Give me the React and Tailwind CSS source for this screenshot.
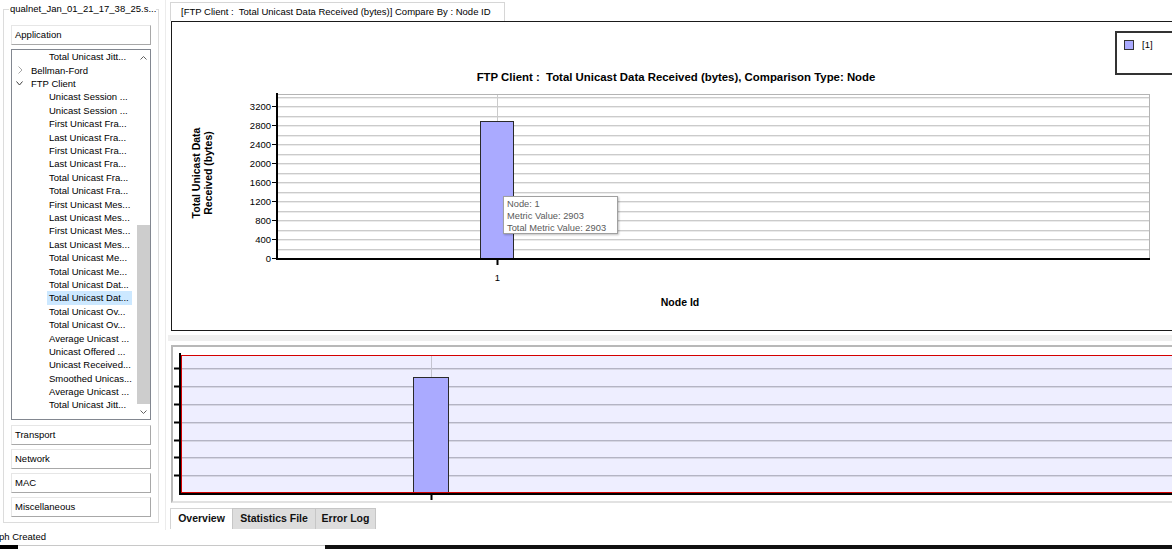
const treeItems = [
  "Unicast Session ...",
  "Unicast Session ...",
  "First Unicast Fra...",
  "Last Unicast Fra...",
  "First Unicast Fra...",
  "Last Unicast Fra...",
  "Total Unicast Fra...",
  "Total Unicast Fra...",
  "First Unicast Mes...",
  "Last Unicast Mes...",
  "First Unicast Mes...",
  "Last Unicast Mes...",
  "Total Unicast Me...",
  "Total Unicast Me...",
  "Total Unicast Dat...",
  "Total Unicast Dat...",
  "Total Unicast Ov...",
  "Total Unicast Ov...",
  "Average Unicast ...",
  "Unicast Offered ...",
  "Unicast Received...",
  "Smoothed Unicas...",
  "Average Unicast ...",
  "Total Unicast Jitt...",
];

const SELECTED = 15;

function SideButton({ label, className }) {
  return (
    <div
      className={`ml-[7px] flex h-[20px] w-[140px] items-center border border-[#e6e6e6] border-r-[#a8a8a8] border-b-[#a8a8a8] bg-white pl-[3px] text-[9.5px] text-black ${className}`}
    >
      {label}
    </div>
  );
}

function LeafRow({ label, selected }) {
  return (
    <div className="flex h-[13.4px] items-center pl-[35px]">
      <span
        className={`block h-[13.4px] pl-[2px] pr-[3px] leading-[13.4px] whitespace-nowrap ${
          selected ? "bg-[#cce8ff]" : ""
        }`}
      >
        {label}
      </span>
    </div>
  );
}

function Tree() {
  return (
    <div className="ml-[7px] mt-[4px] flex h-[371px] w-[140px] border border-[#828790] bg-white">
      <div className="flex-1 overflow-hidden pt-[0.3px] text-[9.5px] text-black">
        <LeafRow label="Total Unicast Jitt..." />
        <div className="flex h-[13.4px] items-center pl-[6px]">
          <svg width="5" height="8" viewBox="0 0 5 8" className="block">
            <polyline points="0.5,0.5 4,4 0.5,7.5" fill="none" stroke="#a6a6a6" strokeWidth="1" />
          </svg>
          <span className="ml-[8px] leading-[13.4px]">Bellman-Ford</span>
        </div>
        <div className="flex h-[13.4px] items-center pl-[4px]">
          <svg width="7" height="5" viewBox="0 0 7 5" className="block">
            <polyline points="0.5,0.5 3.5,4 6.5,0.5" fill="none" stroke="#404040" strokeWidth="1" />
          </svg>
          <span className="ml-[8px] leading-[13.4px]">FTP Client</span>
        </div>
        {treeItems.map((t, i) => (
          <LeafRow key={i} label={t} selected={i === SELECTED} />
        ))}
      </div>
      {/* scrollbar */}
      <div className="flex w-[14px] flex-col">
        <div className="flex h-[15px] items-center justify-center">
          <svg width="7" height="4" viewBox="0 0 7 4" className="block">
            <polyline points="0.5,3.5 3.5,0.5 6.5,3.5" fill="none" stroke="#606060" strokeWidth="1" />
          </svg>
        </div>
        <div className="flex flex-1 flex-col">
          <div className="flex-1" />
          <div className="mx-auto h-[179px] w-[13px] bg-[#cdcdcd]" />
        </div>
        <div className="flex h-[15px] items-center justify-center">
          <svg width="7" height="4" viewBox="0 0 7 4" className="block">
            <polyline points="0.5,0.5 3.5,3.5 6.5,0.5" fill="none" stroke="#606060" strokeWidth="1" />
          </svg>
        </div>
      </div>
    </div>
  );
}

function LeftPanel() {
  return (
    <div className="w-[165px] shrink-0 bg-white">
      <div className="relative ml-[3px] mt-[9px] h-[514px] w-[156px] border border-[#dcdcdc] pt-[15px]">
        <span className="absolute left-[5px] top-[-8px] bg-white pl-[1px] text-[9.5px] leading-[13px] whitespace-nowrap text-black">
          qualnet_Jan_01_21_17_38_25.s...
        </span>
        <SideButton label="Application" />
        <Tree />
        <SideButton label="Transport" className="mt-[5px]" />
        <SideButton label="Network" className="mt-[4px]" />
        <SideButton label="MAC" className="mt-[4px]" />
        <SideButton label="Miscellaneous" className="mt-[4px]" />
      </div>
    </div>
  );
}

function MainChart() {
  const ticks = [0, 400, 800, 1200, 1600, 2000, 2400, 2800, 3200];
  const yOf = (v) => 258 - (v * 19) / 400;
  const grid = [];
  for (let k = 1; k <= 17; k++) grid.push(Math.round(258 - k * 9.5));
  return (
    <svg width="1000" height="308" viewBox="172 22 1000 308" className="block">
      <text x="676" y="81" textAnchor="middle" fontSize="11.4" fontWeight="700" fill="#000">
        {"FTP Client :\u00a0 Total Unicast Data Received (bytes), Comparison Type: Node"}
      </text>

      {/* plot frame */}
      <rect x="277.5" y="94.5" width="872" height="164" fill="#fff" stroke="#b4b4b4" strokeWidth="1" />
      {grid.map((y, i) => (
        <g key={i}>
          <line x1="278" x2="1149" y1={y + 0.5} y2={y + 0.5} stroke="#cbcbcb" strokeWidth="1" />
          <line x1="278" x2="1149" y1={y + 1.5} y2={y + 1.5} stroke="#ebebeb" strokeWidth="1" />
        </g>
      ))}

      {/* vertical gridline at category */}
      <line x1="497.5" x2="497.5" y1="95" y2="121" stroke="#cbcbcb" strokeWidth="1" />

      {/* bar */}
      <rect x="480.5" y="121.5" width="33" height="137" fill="#aaaaff" stroke="#2a2a2a" strokeWidth="1" />

      {/* axes */}
      <line x1="277" x2="277" y1="93" y2="260" stroke="#000" strokeWidth="2" />
      <line x1="276" x2="1150" y1="259" y2="259" stroke="#000" strokeWidth="2" />
      {ticks.map((v) => (
        <g key={v}>
          <line x1="272" x2="277" y1={Math.round(yOf(v)) + 0.5} y2={Math.round(yOf(v)) + 0.5} stroke="#000" strokeWidth="1" />
          <text x="271" y={yOf(v) + 3.5} textAnchor="end" fontSize="9.5" fill="#000">
            {v}
          </text>
        </g>
      ))}
      <line x1="497.5" x2="497.5" y1="260" y2="265" stroke="#000" strokeWidth="2" />
      <text x="497.5" y="281" textAnchor="middle" fontSize="9.5" fill="#000">
        1
      </text>
      <text x="680" y="306" textAnchor="middle" fontSize="10.5" fontWeight="700" fill="#000">
        Node Id
      </text>

      <g transform="translate(200,173) rotate(-90)">
        <text x="0" y="0" textAnchor="middle" fontSize="10.5" fontWeight="700" fill="#000">
          Total Unicast Data
        </text>
        <text x="0" y="12" textAnchor="middle" fontSize="10.5" fontWeight="700" fill="#000">
          Received (bytes)
        </text>
      </g>
    </svg>
  );
}

function OverviewChart() {
  const ys = [368, 386, 404, 422, 440, 457, 475];
  return (
    <svg width="999" height="154" viewBox="173 347 999 154" className="block">
      <rect x="181" y="355" width="991" height="139" fill="#eeeeff" />
      {ys.map((y) => (
        <g key={y}>
          <line x1="181" x2="1172" y1={y + 0.5} y2={y + 0.5} stroke="#b4b4c4" strokeWidth="1" />
          <line x1="181" x2="1172" y1={y + 1.5} y2={y + 1.5} stroke="#d6d6e4" strokeWidth="1" />
          <line x1="174" x2="180" y1={y + 0.5} y2={y + 0.5} stroke="#000" strokeWidth="2" />
        </g>
      ))}
      <line x1="431.5" x2="431.5" y1="356" y2="377" stroke="#c4c4d0" strokeWidth="1" />
      <rect x="413.5" y="377.5" width="35" height="116" fill="#aaaaff" stroke="#2a2a2a" strokeWidth="1" />
      <line x1="181" x2="1172" y1="355.5" y2="355.5" stroke="#d40000" strokeWidth="1" />
      <line x1="181.5" x2="181.5" y1="355" y2="494" stroke="#d40000" strokeWidth="1" />
      <line x1="181" x2="1172" y1="492.5" y2="492.5" stroke="#d40000" strokeWidth="1" />
      <line x1="179" x2="1172" y1="494" y2="494" stroke="#000" strokeWidth="2" />
      <line x1="180" x2="180" y1="353" y2="495" stroke="#000" strokeWidth="2" />
      <line x1="431.5" x2="431.5" y1="495" y2="500" stroke="#000" strokeWidth="2" />
    </svg>
  );
}

function RightPanel() {
  return (
    <div className="flex min-w-0 flex-1 flex-col overflow-hidden border-l border-[#ececec] bg-white">
      {/* title tab */}
      <div className="flex h-[21px] items-end pl-[4px]">
        <div className="flex h-[19px] w-[335px] items-center border border-b-0 border-[#d6d6d6] bg-white pl-[10px] text-[9.5px] whitespace-nowrap text-black">
          {"[FTP Client :\u00a0 Total Unicast Data Received (bytes)] Compare By : Node ID"}
        </div>
      </div>

      {/* main chart panel */}
      <div className="relative ml-[5px] h-[310px] w-[1010px] border border-r-0 border-[#1a1a1a] bg-white">
        <MainChart />
        {/* legend */}
        <div className="absolute left-[943px] top-[9px] flex h-[44px] w-[80px] items-start border-2 border-r-0 border-[#333] bg-white pl-[7px] pt-[7px]">
          <div className="h-[10px] w-[10px] border border-[#333] bg-[#aaaaff]" />
          <span className="ml-[8px] text-[9.5px] leading-[10px] text-black">[1]</span>
        </div>
        {/* tooltip */}
        <div className="absolute left-[331px] top-[174px] h-[38px] w-[115px] border border-[#a0a0a0] bg-white pl-[3px] pt-[1px] text-[9.3px] leading-[12px] text-[#5a5a5a] shadow-[1px_1px_2px_rgba(0,0,0,0.25)]">
          <div>Node: 1</div>
          <div>Metric Value: 2903</div>
          <div>Total Metric Value: 2903</div>
        </div>
      </div>

      {/* splitter */}
      <div className="h-[14px] pt-[4px] pl-[2px]">
        <div className="h-[6px] bg-[#efefef]" />
      </div>

      {/* overview panel */}
      <div className="ml-[5px] h-[158px] w-[1010px] border-2 border-r-0 border-[#b8b8b8] border-b-[#e2e2e2] bg-white">
        <OverviewChart />
      </div>

      {/* bottom tabs */}
      <div className="flex h-[27px] pl-[4px] pt-[5px] text-[10.5px] font-bold text-[#111]">
        <div className="flex h-[21px] w-[62px] items-center justify-center border-l border-t border-[#d4d4d4] bg-white">
          Overview
        </div>
        <div className="flex h-[21px] w-[83px] items-center justify-center border-l border-t border-[#c6c6c6] bg-[#dddddd]">
          Statistics File
        </div>
        <div className="flex h-[21px] w-[61px] items-center justify-center border-x border-t border-[#c6c6c6] bg-[#dddddd]">
          Error Log
        </div>
      </div>
    </div>
  );
}

export default function App() {
  return (
    <div className="flex h-[549px] w-[1172px] flex-col overflow-hidden bg-white font-['Liberation_Sans',Arial,sans-serif] text-black">
      <div className="flex h-[530px]">
        <LeftPanel />
        <RightPanel />
      </div>
      <div className="flex h-[15px] items-center pl-0 text-[9.5px] text-black">
        <span className="-ml-[1px]">ph Created</span>
      </div>
      <div className="flex h-[4px]">
        <div className="w-[18px] bg-black" />
        <div className="w-[307px] border-t border-[#c8c8c8] bg-white" />
        <div className="flex-1 bg-[#111]" />
      </div>
    </div>
  );
}
